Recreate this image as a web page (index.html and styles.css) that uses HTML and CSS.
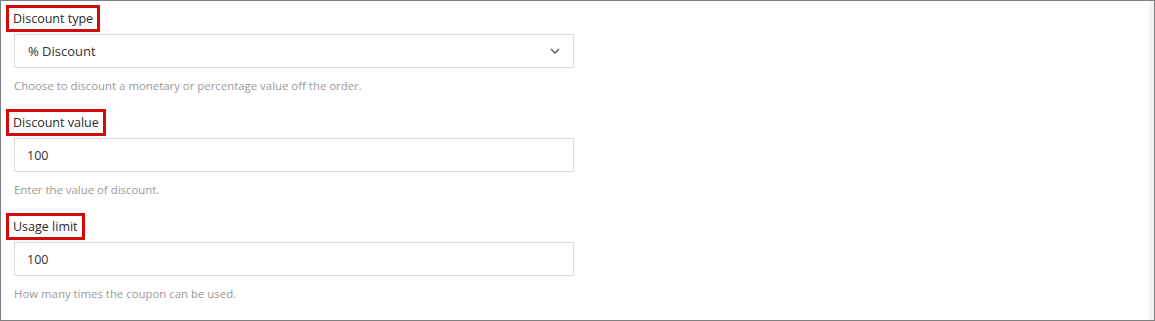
FILE: index.html
```html
<!DOCTYPE html>
<html lang="en">
<head>
    <meta charset="UTF-8">
    <title>Coupon data</title>
    <link rel="stylesheet" href="styles.css">
</head>
<body>

<div class="painel">
    <div class="campo">
        <label class="rotulo" for="tipo">Discount type</label>
        <div class="seletor">
            <span>% Discount</span>
            <svg class="seta" width="10" height="6" viewBox="0 0 10 6">
                <path d="M1 1 L5 5 L9 1" fill="none" stroke="#555" stroke-width="1.3"/>
            </svg>
        </div>
        <p class="ajuda">Choose to discount a monetary or percentage value off the order.</p>
    </div>

    <div class="campo">
        <label class="rotulo" for="valor">Discount value</label>
        <input class="entrada" type="text" id="valor" value="100">
        <p class="ajuda">Enter the value of discount.</p>
    </div>

    <div class="campo">
        <label class="rotulo" for="limite">Usage limit</label>
        <input class="entrada" type="text" id="limite" value="100">
        <p class="ajuda">How many times the coupon can be used.</p>
    </div>
</div>

</body>
</html>
```

FILE: styles.css
```css
body {
    margin: 0;
    background-color: white;
    font-family: "Open Sans", "Noto Sans", sans-serif;
    color: #333333;
}

.painel {
    width: 1155px;
    height: 321px;
    box-sizing: border-box;
    border: 1px solid #808080;
    box-shadow: inset -5px 0 0 #f4f4f4;
    padding: 4px 0 0 5px;
}

.campo {
    margin-bottom: 15px;
}

.rotulo {
    display: inline-block;
    border: 3px solid #d40a0a;
    padding: 0 4px 0 4px;
    line-height: 21px;
    font-size: 12.5px;
    color: #2b2b2b;
}

.seletor,
.entrada {
    display: flex;
    align-items: center;
    justify-content: space-between;
    box-sizing: border-box;
    width: 560px;
    height: 34px;
    margin: 2px 0 0 8px;
    border: 1px solid #dcdcdc;
    padding: 0 13px 0 13px;
    font-family: inherit;
    font-size: 13px;
    color: #333333;
    background-color: white;
}

.entrada {
    padding-left: 12px;
    font-size: 12.5px;
}

.ajuda {
    margin: 10px 0 0 8px;
    line-height: 16px;
    font-size: 11.4px;
    color: #9a9a9a;
}
```
